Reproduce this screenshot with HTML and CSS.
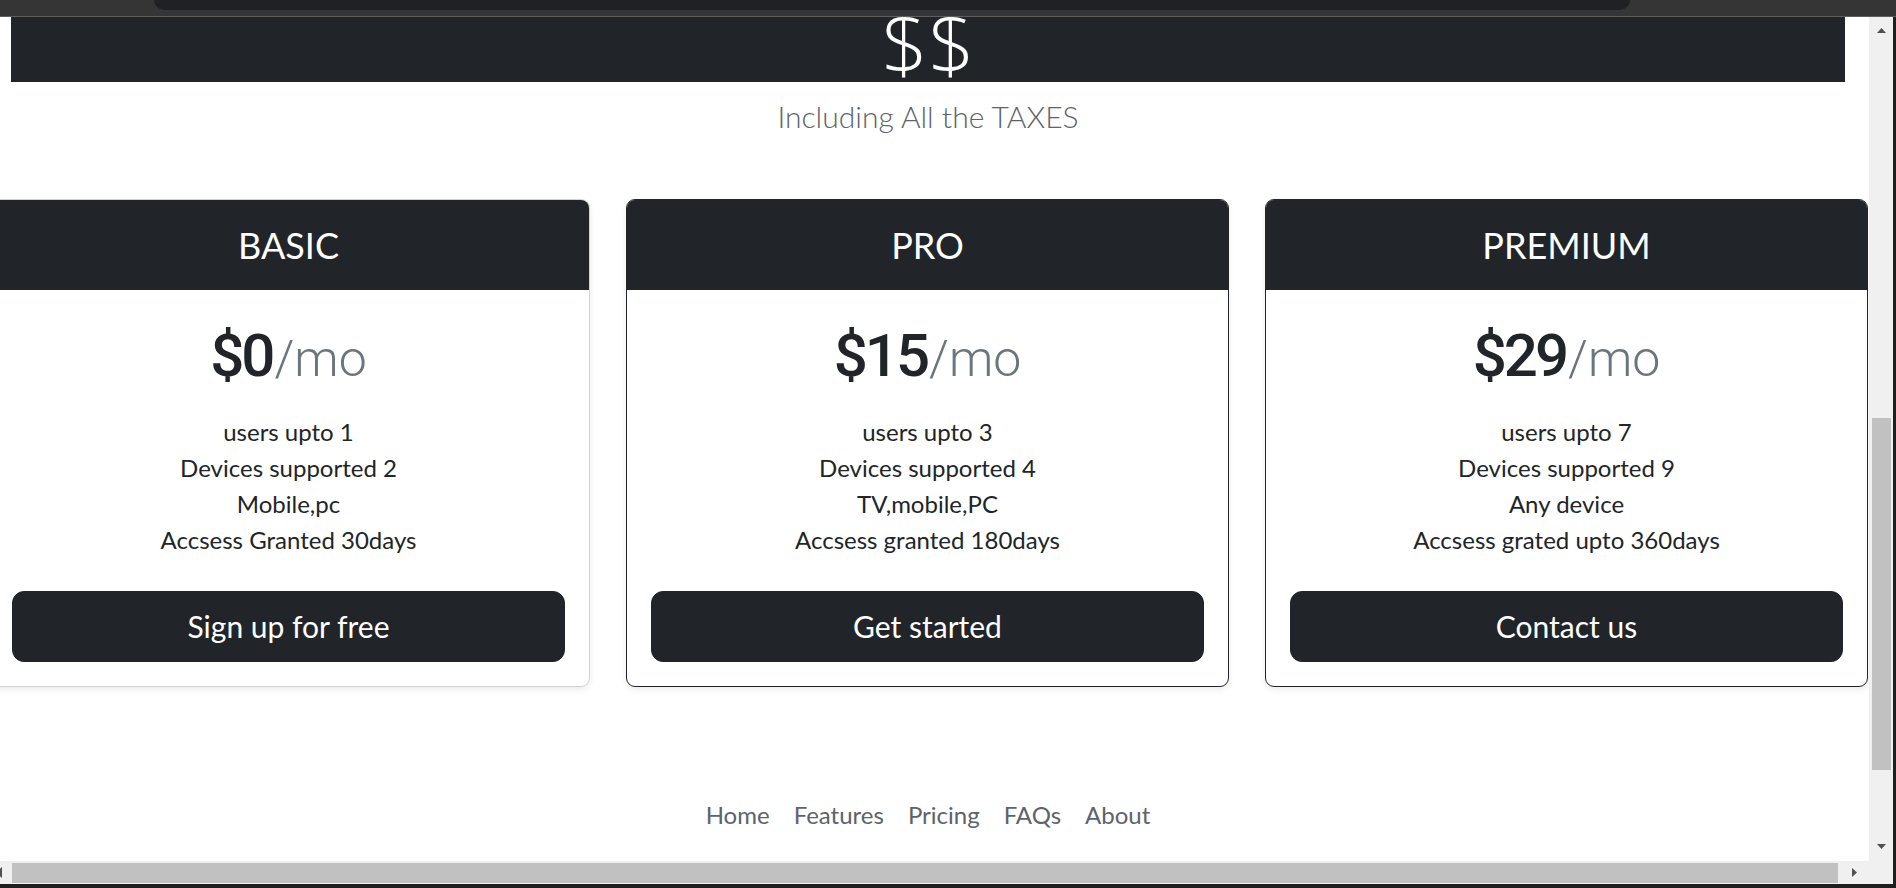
FILE: index.html
```html
<!DOCTYPE html>
<html lang="en">
<head>
<meta charset="utf-8">
<title>Pricing</title>
<link rel="stylesheet" href="styles.css">
</head>
<body>
  <div class="chrome">
    <div class="omnibox"></div>
  </div>
  <div class="frame">
    <div class="main">
      <div class="viewport">
        <div class="band">
          <h1 class="display">$$</h1>
        </div>
        <p class="lead">Including All the TAXES</p>

        <div class="row">
          <div class="card card-light">
            <div class="card-header"><h4>BASIC</h4></div>
            <div class="card-body">
              <h1 class="price"><span class="amount">$0</span><small>/mo</small></h1>
              <ul class="features">
                <li>users upto 1</li>
                <li>Devices supported 2</li>
                <li>Mobile,pc</li>
                <li>Accsess Granted 30days</li>
              </ul>
              <button class="btn">Sign up for free</button>
            </div>
          </div>
          <div class="card">
            <div class="card-header"><h4>PRO</h4></div>
            <div class="card-body">
              <h1 class="price"><span class="amount">$15</span><small>/mo</small></h1>
              <ul class="features">
                <li>users upto 3</li>
                <li>Devices supported 4</li>
                <li>TV,mobile,PC</li>
                <li>Accsess granted 180days</li>
              </ul>
              <button class="btn">Get started</button>
            </div>
          </div>
          <div class="card">
            <div class="card-header"><h4>PREMIUM</h4></div>
            <div class="card-body">
              <h1 class="price"><span class="amount">$29</span><small>/mo</small></h1>
              <ul class="features">
                <li>users upto 7</li>
                <li>Devices supported 9</li>
                <li>Any device</li>
                <li>Accsess grated upto 360days</li>
              </ul>
              <button class="btn">Contact us</button>
            </div>
          </div>
        </div>

        <footer class="footer">
          <ul class="nav">
            <li><a href="#">Home</a></li>
            <li><a href="#">Features</a></li>
            <li><a href="#">Pricing</a></li>
            <li><a href="#">FAQs</a></li>
            <li><a href="#">About</a></li>
          </ul>
        </footer>
      </div>
      <div class="hbar">
        <svg class="harrow-left" width="12" height="23" viewBox="0 0 12 23"><polygon points="-4,11.5 2,6 2,17" fill="#505050"/></svg>
        <div class="hthumb"></div>
        <svg class="harrow-right" width="31" height="23" viewBox="0 0 31 23"><polygon points="14,7 19,11.5 14,16" fill="#505050"/></svg>
      </div>
    </div>
    <div class="vcol">
      <div class="vbar">
        <svg class="varrow" width="24" height="26" viewBox="0 0 24 26"><polygon points="8,16 12.5,11 17,16" fill="#505050"/></svg>
        <div class="vspace-top"></div>
        <div class="vthumb"></div>
        <div class="vspace-bottom"></div>
        <svg class="varrow" width="24" height="26" viewBox="0 0 24 26"><polygon points="8,9 12.5,14 17,9" fill="#505050"/></svg>
      </div>
      <div class="corner"></div>
    </div>
  </div>
</body>
</html>
```

FILE: styles.css
```css
* {
  box-sizing: border-box;
}

html, body {
  margin: 0;
  padding: 0;
}

body {
  width: 1896px;
  height: 888px;
  overflow: hidden;
  display: flex;
  flex-direction: column;
  background: #1f1f1f;
  font-family: "Lato", "Open Sans", sans-serif;
  color: #212529;
}

/* browser chrome strip */
.chrome {
  height: 17px;
  flex: 0 0 17px;
  background: #353535;
  border-bottom: 1px solid #5e5e5e;
}

.omnibox {
  margin-left: 154px;
  width: 1476px;
  height: 10px;
  background: #202124;
  border-radius: 0 0 15px 15px;
}

.frame {
  flex: 1;
  display: flex;
  border-right: 3px solid #1f1f1f;
  border-bottom: 4px solid #1f1f1f;
  min-height: 0;
}

.main {
  flex: 1;
  display: flex;
  flex-direction: column;
  min-width: 0;
}

.viewport {
  flex: 1;
  background: #ffffff;
  overflow: hidden;
  min-height: 0;
}

/* header band */
.band {
  margin-left: 11px;
  width: 1834px;
  height: 65px;
  background: #212529;
  overflow: hidden;
  display: flex;
  justify-content: center;
  align-items: flex-end;
}

.display {
  margin: 0;
  font-family: "Open Sans", "Lato", sans-serif;
  font-size: 82px;
  font-weight: 300;
  line-height: 1;
  color: #ffffff;
}

.lead {
  margin: 12px 0 0 11px;
  width: 1834px;
  text-align: center;
  font-size: 30px;
  line-height: 45px;
  font-weight: 300;
  color: #5c636a;
}

/* cards */
.row {
  display: flex;
  gap: 36px;
  margin: 60px 0 0 -13px;
  text-align: center;
}

.card {
  flex: 0 0 603px;
  border: 1px solid #212529;
  border-radius: 9px;
  overflow: hidden;
  background: #fff;
  box-shadow: 0 3px 6px rgba(0, 0, 0, 0.075);
}

.card-light {
  border-color: rgba(0, 0, 0, 0.175);
}

.card-header {
  background: #212529;
  color: #ffffff;
  padding: 24px 0 23px;
}

.card-header h4 {
  margin: 0;
  font-size: 36px;
  font-weight: 400;
  line-height: 43px;
}

.card-body {
  padding: 30px 24px 24px;
}

.price {
  margin: 0;
  font-family: "Roboto", "Lato", sans-serif;
  font-size: 60px;
  font-weight: 500;
  line-height: 72px;
  color: #212529;
}

.amount {
  letter-spacing: -3px;
}

.price small {
  font-size: 50px;
  font-weight: 300;
  color: #6c757d;
  margin-left: 2px;
}

.features {
  list-style: none;
  margin: 19px 0 33px;
  padding: 0;
  font-size: 24px;
  line-height: 36px;
}

.btn {
  display: block;
  width: 100%;
  padding: 12px 24px;
  font-family: inherit;
  font-size: 30px;
  line-height: 45px;
  color: #ffffff;
  background: #212529;
  border: 1px solid #212529;
  border-radius: 12px;
}

/* footer */
.footer {
  margin-top: 110px;
}

.nav {
  list-style: none;
  margin: 0;
  padding: 0;
  display: flex;
  justify-content: center;
  margin-left: 11px;
  width: 1834px;
}

.nav a {
  display: block;
  padding: 0 12px;
  font-size: 24px;
  line-height: 36px;
  color: #5c636a;
  text-decoration: none;
}

/* window scrollbars */
.hbar {
  height: 23px;
  flex: 0 0 23px;
  background: #f0f0f0;
  display: flex;
  align-items: center;
}

.harrow-left {
  flex: 0 0 12px;
}

.hthumb {
  flex: 1;
  height: 20px;
  background: #c1c1c1;
}

.harrow-right {
  flex: 0 0 31px;
}

.vcol {
  flex: 0 0 24px;
  display: flex;
  flex-direction: column;
  background: #f0f0f0;
}

.vbar {
  flex: 1;
  display: flex;
  flex-direction: column;
  align-items: center;
}

.varrow {
  flex: 0 0 26px;
}

.vspace-top {
  flex: 0 0 375px;
}

.vthumb {
  flex: 0 0 352px;
  width: 19px;
  background: #c1c1c1;
}

.vspace-bottom {
  flex: 1;
}

.corner {
  flex: 0 0 23px;
  background: #f0f0f0;
}
```
